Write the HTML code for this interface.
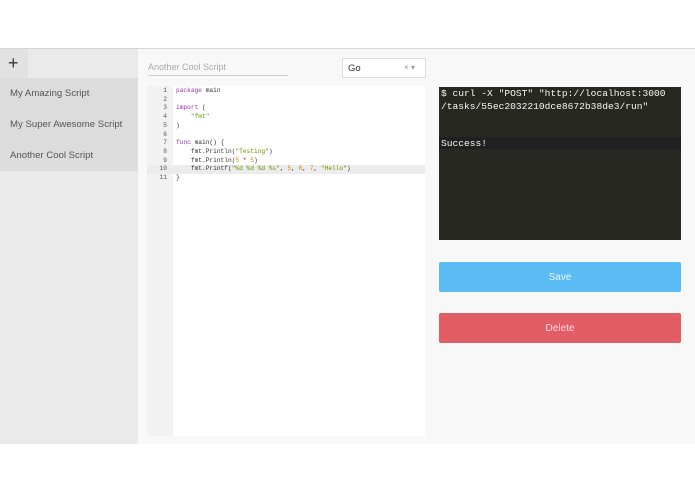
<!DOCTYPE html>
<html><head><style>
*{margin:0;padding:0;box-sizing:border-box}
body{width:695px;height:494px;background:#fff;font-family:"Liberation Sans",sans-serif;position:relative;overflow:hidden}
.a{position:absolute}
.code{font-family:"Liberation Mono",monospace;font-size:6.2px;line-height:8.7px}
</style></head><body>
<div class="a" style="left:0;top:48px;width:695px;height:1px;background:#d6d6d6"></div>
<div class="a" style="left:0;top:49px;width:138px;height:395px;background:#eaeaea"></div>
<div class="a" style="left:0;top:49px;width:28px;height:29px;background:#e2e2e2"></div>
<div class="a" style="left:8px;top:53px;font-size:18px;color:#333">+</div>
<div class="a" style="left:0;top:78px;width:138px;height:93px;background:#dcdcdc"></div>
<div class="a" style="left:10px;top:88px;font-size:9.6px;color:#555">My Amazing Script</div>
<div class="a" style="left:10px;top:119px;font-size:9.6px;color:#555">My Super Awesome Script</div>
<div class="a" style="left:10px;top:150px;font-size:9.6px;color:#555">Another Cool Script</div>
<div class="a" style="left:138px;top:49px;width:557px;height:395px;background:#f8f8f8"></div>
<div class="a" style="left:148px;top:62px;font-size:9px;color:#aaa">Another Cool Script</div>
<div class="a" style="left:148px;top:75px;width:140px;height:1px;background:#ccc"></div>
<div class="a" style="left:342px;top:58px;width:84px;height:20px;background:#fff;border:1px solid #ddd;border-radius:2px"></div>
<div class="a" style="left:348px;top:63px;font-size:9.5px;color:#333">Go</div>
<div class="a" style="left:404px;top:63px;font-size:8px;color:#999">× ▾</div>
<div class="a" style="left:147px;top:86px;width:278px;height:350px;background:#fff"></div>
<div class="a" style="left:147px;top:86px;width:26px;height:350px;background:#f2f2f2"></div>
<div class="a" style="left:147px;top:165px;width:278px;height:9px;background:#ececec"></div>
<div class="a code" style="left:147px;top:87px;width:20px;text-align:right;color:#555">1<br>2<br>3<br>4<br>5<br>6<br>7<br>8<br>9<br>10<br>11</div>
<div class="a code" style="left:176px;top:87px;color:#333;white-space:pre"><span style="color:#93a">package</span> main

<span style="color:#93a">import</span> (
    <span style="color:#690">"fmt"</span>
)

<span style="color:#93a">func</span> main() {
    fmt.Println(<span style="color:#690">"Testing"</span>)
    fmt.Println(<span style="color:#d80">5</span> * <span style="color:#d80">5</span>)
    fmt.Printf(<span style="color:#690">"%d %d %d %s"</span>, <span style="color:#d80">5</span>, <span style="color:#d80">6</span>, <span style="color:#d80">7</span>, <span style="color:#690">"Hello"</span>)
}</div>
<div class="a" style="left:439px;top:87px;width:242px;height:153px;background:#272822"></div>
<div class="a" style="left:439px;top:137px;width:242px;height:12px;background:#202020"></div>
<div class="a" style="left:441px;top:88px;font-family:'Liberation Mono',monospace;font-size:9.6px;line-height:12.5px;color:#f8f8f2;white-space:pre">$ curl -X "POST" "http://localhost:3000
/tasks/55ec2032210dce8672b38de3/run"


Success!</div>
<div class="a" style="left:439px;top:262px;width:242px;height:30px;background:#5bbcf5;border-radius:2px;color:#e8f6ff;font-size:10px;text-align:center;line-height:32px">Save</div>
<div class="a" style="left:439px;top:313px;width:242px;height:30px;background:#e25d64;border-radius:2px;color:#fde;font-size:10px;text-align:center;line-height:32px">Delete</div>
</body></html>
